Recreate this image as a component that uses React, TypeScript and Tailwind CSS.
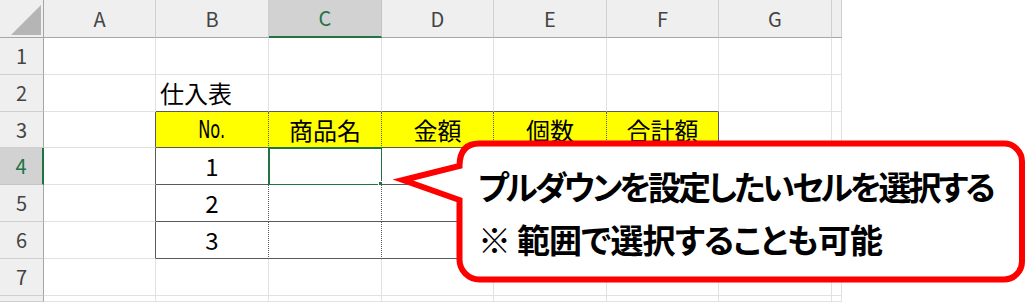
import React from "react";

const letters = ["", "A", "B", "C", "D", "E", "F", "G", ""];
const JP = "[font-family:'Noto_Sans_CJK_JP','Noto_Sans',sans-serif]";

function headerCell(c: number) {
  if (c === 0) {
    return (
      <div key="h0" className="relative bg-[#efefef] border-r border-b border-r-[#a6a6a6] border-b-[#a6a6a6]">
        <svg className="absolute left-0 top-0" width="44" height="38" viewBox="0 0 44 38">
          <polygon points="41,5 41,35 11,35" fill="#b5b5b5" />
        </svg>
      </div>
    );
  }
  const active = c === 3;
  return (
    <div
      key={"h" + c}
      className={
        active
          ? "flex items-center justify-center bg-[#d2d2d2] border-r border-r-[#c4c4c4] border-b-2 border-b-[#217346] text-[#217346] text-[20px] pb-[1px]"
          : "flex items-center justify-center bg-[#efefef] border-r border-r-[#cfcfcf] border-b border-b-[#a6a6a6] text-[#444444] text-[20px]"
      }
    >
      {letters[c]}
    </div>
  );
}

function rowHeader(r: number) {
  const active = r === 4;
  return (
    <div
      key={"r" + r}
      className={
        active
          ? "flex items-center justify-center bg-[#d2d2d2] border-r-2 border-r-[#217346] border-b border-b-[#c4c4c4] text-[#217346] text-[20px]"
          : "flex items-center justify-center bg-[#efefef] border-r border-r-[#a6a6a6] border-b border-b-[#cfcfcf] text-[#444444] text-[20px]"
      }
    >
      {r <= 7 ? String(r) : ""}
    </div>
  );
}

const content: Record<string, string> = {
  "3-3": "商品名",
  "3-4": "金額",
  "3-5": "個数",
  "3-6": "合計額",
  "4-2": "1",
  "5-2": "2",
  "6-2": "3",
};

function bodyCell(r: number, c: number) {
  const inTable = r >= 3 && r <= 6 && c >= 2 && c <= 6;
  let right = "border-r-[#e1e1e1]";
  if (inTable && c <= 5) right = "border-r-[#5a5a5a] [border-right-style:dotted]";
  if (inTable && c === 6) right = "border-r-[#5a5a5a]";
  if (r >= 3 && r <= 6 && c === 1) right = "border-r-[#5a5a5a]";
  const bottom = r >= 2 && r <= 6 && c >= 2 && c <= 6 ? "border-b-[#5a5a5a]" : "border-b-[#e1e1e1]";
  const bg = r === 3 && inTable ? "bg-[#ffff00]" : "bg-white";
  const key = r + "-" + c;

  if (r === 2 && c === 2) {
    return (
      <div key={key} className={"relative flex items-center border-r border-b whitespace-nowrap pl-[4px] text-[24px] text-black z-10 " + right + " " + bottom + " " + bg}>
        仕入表
      </div>
    );
  }
  const isNo = r === 3 && c === 2;
  const isActive = r === 4 && c === 3;
  return (
    <div key={key} className={"relative flex items-center justify-center border-r border-b text-black text-[24px] " + right + " " + bottom + " " + bg}>
      {isNo ? (
        <span className="inline-block scale-x-[0.72] [font-family:'Liberation_Sans_Narrow','DejaVu_Sans_Condensed','Liberation_Sans',sans-serif] text-[25px]">No.</span>
      ) : (
        content[key] || ""
      )}
      {isActive && (
        <>
          <div className="absolute left-[-1px] top-[-1px] w-[115px] h-[39px] border-2 border-[#217346]" />
          <div className="absolute left-[109px] top-[33px] w-[7px] h-[7px] bg-[#217346] border border-white" />
        </>
      )}
    </div>
  );
}

function Callout() {
  return (
    <div className="absolute left-[388px] top-[136px] w-[638px] h-[150px] z-20">
      <svg className="absolute inset-0" width="638" height="150" viewBox="388 136 638 150">
        <path
          d="M 479.5 143.5 L 1004 143.5 A 18 18 0 0 1 1022 161.5 L 1022 261.5 A 18 18 0 0 1 1004 279.5 L 479.5 279.5 A 20 20 0 0 1 459.5 259.5 L 459.5 200 L 403 180 L 459.5 166 Q 459.5 143.5 479.5 143.5 Z"
          fill="#ffffff"
          stroke="#ff0000"
          strokeWidth="6"
          strokeLinejoin="miter"
        />
      </svg>
      <div className="relative flex flex-col pl-[90px] pt-[24px] text-[33px] leading-[53px] font-bold text-black whitespace-nowrap [font-feature-settings:'palt']">
        <div className="tracking-[-3px]">プルダウンを設定したいセルを選択する</div>
        <div className="tracking-[-0.8px]">※ 範囲で選択することも可能</div>
      </div>
    </div>
  );
}

export default function App() {
  const cells: React.ReactNode[] = [];
  for (let r = 0; r <= 8; r++) {
    for (let c = 0; c <= 8; c++) {
      if (r === 0) cells.push(headerCell(c));
      else if (c === 0) cells.push(rowHeader(r));
      else cells.push(bodyCell(r, c));
    }
  }
  return (
    <div className={"relative w-[1026px] h-[302px] overflow-hidden bg-white flex " + JP}>
      <div className="grid grid-cols-[44px_112px_113px_113px_112px_113px_112px_113px_10px] grid-rows-[38px_37px_37px_36px_37px_37px_37px_37px_6px] w-[842px] h-[302px] leading-none">
        {cells}
      </div>
      <Callout />
    </div>
  );
}
